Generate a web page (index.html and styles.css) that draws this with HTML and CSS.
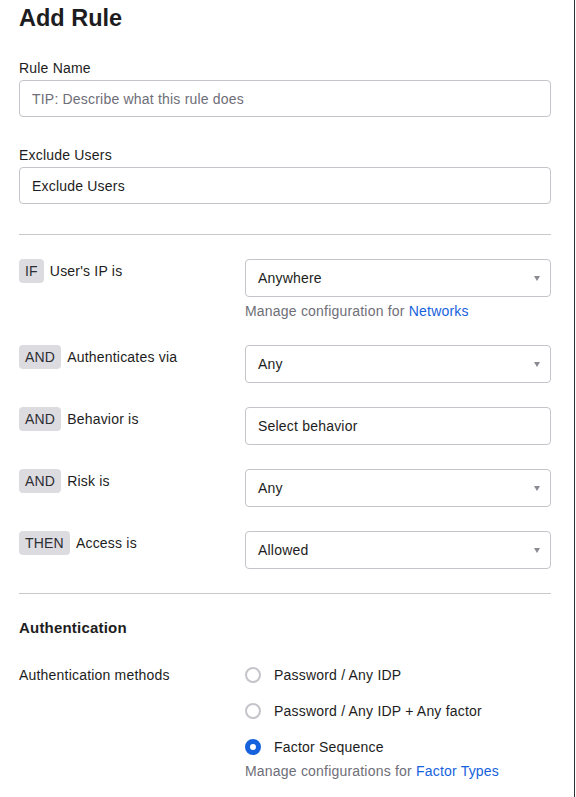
FILE: index.html
```html
<!DOCTYPE html>
<html lang="en">
<head>
<meta charset="utf-8">
<title>Add Rule</title>
<link rel="stylesheet" href="styles.css">
</head>
<body>
<div class="page">
  <h1 class="title">Add Rule</h1>

  <div class="field">
    <label class="field-label" for="rule-name">Rule Name</label>
    <input class="text-input" id="rule-name" type="text" placeholder="TIP: Describe what this rule does">
  </div>

  <div class="field">
    <div class="field-label">Exclude Users</div>
    <div class="text-box">Exclude Users</div>
  </div>

  <hr class="divider">

  <div class="conditions">
    <div class="cond-row">
      <div class="cond-left"><span class="badge">IF</span><span class="cond-label">User's IP is</span></div>
      <div class="cond-right">
        <div class="select">Anywhere<span class="caret"></span></div>
        <div class="helper">Manage configuration for <a class="link" href="#">Networks</a></div>
      </div>
    </div>
    <div class="cond-row">
      <div class="cond-left"><span class="badge">AND</span><span class="cond-label">Authenticates via</span></div>
      <div class="cond-right">
        <div class="select">Any<span class="caret"></span></div>
      </div>
    </div>
    <div class="cond-row">
      <div class="cond-left"><span class="badge">AND</span><span class="cond-label">Behavior is</span></div>
      <div class="cond-right">
        <div class="select">Select behavior</div>
      </div>
    </div>
    <div class="cond-row">
      <div class="cond-left"><span class="badge">AND</span><span class="cond-label">Risk is</span></div>
      <div class="cond-right">
        <div class="select">Any<span class="caret"></span></div>
      </div>
    </div>
    <div class="cond-row">
      <div class="cond-left"><span class="badge">THEN</span><span class="cond-label">Access is</span></div>
      <div class="cond-right">
        <div class="select">Allowed<span class="caret"></span></div>
      </div>
    </div>
  </div>

  <hr class="divider divider-2">

  <h2 class="section-title">Authentication</h2>

  <div class="auth-row">
    <div class="auth-label">Authentication methods</div>
    <div class="auth-options">
      <div class="radio-row"><span class="radio"></span><span>Password / Any IDP</span></div>
      <div class="radio-row"><span class="radio"></span><span>Password / Any IDP + Any factor</span></div>
      <div class="radio-row"><span class="radio radio-checked"></span><span>Factor Sequence</span></div>
      <div class="helper helper-auth">Manage configurations for <a class="link" href="#">Factor Types</a></div>
    </div>
  </div>
</div>
</body>
</html>
```

FILE: styles.css
```css
* { box-sizing: border-box; }

html, body {
  margin: 0;
  padding: 0;
  background: #ffffff;
}

body {
  font-family: "Liberation Sans", Arial, sans-serif;
  font-size: 14px;
  line-height: 20px;
  letter-spacing: 0.2px;
  color: #1d1d21;
}

.page {
  width: 575px;
  min-height: 100vh;
  border-right: 1px solid #2b2f36;
  padding: 4px 23px 0 19px;
}

.title {
  margin: 0;
  font-size: 23.5px;
  line-height: 28px;
  font-weight: 700;
  letter-spacing: 0;
  color: #1d1d21;
}

.field {
  display: flex;
  flex-direction: column;
  margin-top: 26px;
}

.field + .field { margin-top: 28px; }

.field-label {
  display: block;
  margin-bottom: 2px;
  color: #1d1d21;
}

.text-input,
.text-box {
  width: 100%;
  height: 37px;
  border: 1px solid #c4c4ca;
  border-radius: 4px;
  padding: 0 12px;
  font: inherit;
  letter-spacing: 0.2px;
  color: #1d1d21;
  background: #fff;
  display: flex;
  align-items: center;
}

.text-input::placeholder { color: #6e6e78; opacity: 1; }

.divider {
  border: 0;
  border-top: 1px solid #c8c8cd;
  margin: 30px 0 24px;
  height: 0;
}

.divider-2 { margin-top: 24px; margin-bottom: 24px; }

.conditions {
  display: flex;
  flex-direction: column;
  gap: 24px;
}

.cond-row {
  display: grid;
  grid-template-columns: 226px 1fr;
}

.cond-left {
  display: flex;
  align-items: center;
  gap: 6px;
  height: 24px;
}

.badge {
  display: inline-flex;
  align-items: center;
  height: 24px;
  padding: 0 6px;
  border-radius: 4px;
  background: #dcdce0;
  color: #2e2e33;
}

.cond-label { color: #1d1d21; }

.select {
  position: relative;
  height: 38px;
  border: 1px solid #c4c4ca;
  border-radius: 4px;
  padding: 0 12px;
  display: flex;
  align-items: center;
  background: #fff;
}

.caret {
  position: absolute;
  right: 10px;
  top: 50%;
  margin-top: -2px;
  width: 0;
  height: 0;
  border-left: 3.5px solid transparent;
  border-right: 3.5px solid transparent;
  border-top: 5px solid #8a8a94;
}

.helper {
  margin-top: 4px;
  color: #6e6e78;
}

.link {
  color: #1662dd;
  text-decoration: none;
}

.section-title {
  margin: 0;
  font-size: 15px;
  line-height: 20px;
  font-weight: 700;
  color: #1d1d21;
}

.auth-row {
  display: grid;
  grid-template-columns: 226px 1fr;
  margin-top: 27px;
}

.auth-options {
  display: flex;
  flex-direction: column;
  gap: 16px;
}

.radio-row {
  display: flex;
  align-items: center;
  gap: 13px;
  height: 20px;
}

.radio {
  width: 16px;
  height: 16px;
  border-radius: 50%;
  border: 2px solid #c4c4ca;
  background: #fff;
  flex: none;
}

.radio-checked {
  border: 5px solid #1662dd;
  background: #fff;
}

.helper-auth { margin-top: -12px; }
```
